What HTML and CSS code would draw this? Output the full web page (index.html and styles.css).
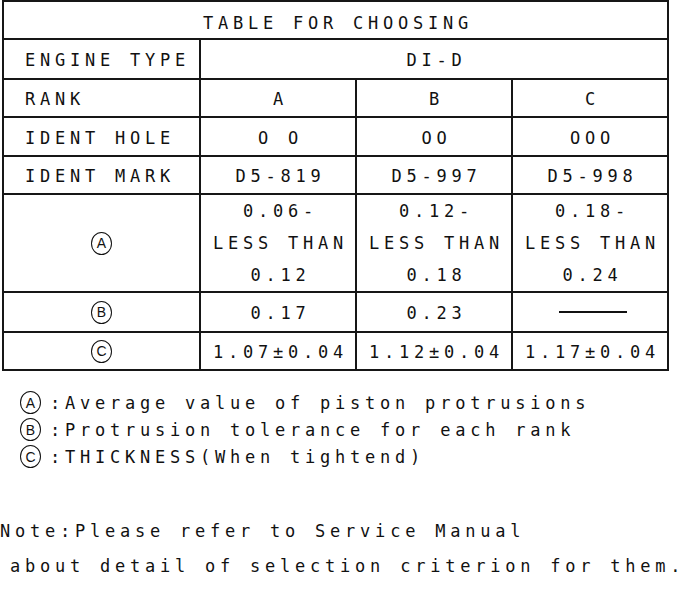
FILE: index.html
```html
<!DOCTYPE html>
<html>
<head>
<meta charset="utf-8">
<link rel="stylesheet" href="styles.css">
</head>
<body>
<table class="chart">
  <colgroup>
    <col class="c-label">
    <col class="c-rank">
    <col class="c-rank">
    <col class="c-rank">
  </colgroup>
  <tr class="r-title"><td colspan="4" class="title">TABLE FOR CHOOSING</td></tr>
  <tr class="r-engine"><td class="label">ENGINE TYPE</td><td colspan="3" class="val">DI-D</td></tr>
  <tr class="r-rank"><td class="label">RANK</td><td class="val">A</td><td class="val">B</td><td class="val">C</td></tr>
  <tr class="r-hole"><td class="label">IDENT HOLE</td><td class="val">O O</td><td class="val">OO</td><td class="val">OOO</td></tr>
  <tr class="r-mark"><td class="label">IDENT MARK</td><td class="val">D5-819</td><td class="val">D5-997</td><td class="val">D5-998</td></tr>
  <tr class="r-a">
    <td class="sym"><span class="circ">A</span></td>
    <td class="val multi"><span>0.06-</span><span>LESS THAN</span><span>0.12</span></td>
    <td class="val multi"><span>0.12-</span><span>LESS THAN</span><span>0.18</span></td>
    <td class="val multi"><span>0.18-</span><span>LESS THAN</span><span>0.24</span></td>
  </tr>
  <tr class="r-b"><td class="sym"><span class="circ">B</span></td><td class="val">0.17</td><td class="val">0.23</td><td class="val"><span class="dash"></span></td></tr>
  <tr class="r-c"><td class="sym"><span class="circ">C</span></td><td class="val">1.07±0.04</td><td class="val">1.12±0.04</td><td class="val">1.17±0.04</td></tr>
</table>

<ul class="legend">
  <li><span class="circ small">A</span><span class="ltext">:Average value of piston protrusions</span></li>
  <li><span class="circ small">B</span><span class="ltext">:Protrusion tolerance for each rank</span></li>
  <li><span class="circ small">C</span><span class="ltext">:THICKNESS(When tightend)</span></li>
</ul>

<div class="note">
  <p>Note:Please refer to Service Manual</p>
  <p class="indent">about detail of selection criterion for them.</p>
</div>
</body>
</html>
```

FILE: styles.css
```css
html, body {
  margin: 0;
  padding: 0;
  background: #ffffff;
}
body {
  font-family: "DejaVu Sans Mono", "Liberation Mono", monospace;
  color: #111;
  width: 697px;
  height: 598px;
  overflow: hidden;
}

.chart {
  border-collapse: collapse;
  table-layout: fixed;
  width: 666px;
  margin: 0 0 0 2px;
}
.c-label { width: 197px; }
.c-rank { width: 156px; }

.chart td {
  border: 2px solid #161616;
  padding: 2px 0 0 0;
  font-size: 17px;
  letter-spacing: 4.77px;
  vertical-align: middle;
  white-space: pre;
}

.r-title { height: 38px; }
.r-engine { height: 40px; }
.r-rank { height: 38px; }
.r-hole { height: 39px; }
.r-mark { height: 38px; }
.r-a { height: 97px; }
.r-b { height: 40px; }
.r-c { height: 38px; }

.chart .title {
  text-align: center;
  padding-top: 5px;
  padding-left: 5px;
}
.chart .label {
  padding-left: 21px;
  text-align: left;
}
.chart .val {
  text-align: center;
  padding-left: 5px;
}
.chart .multi {
  padding-top: 0;
}
.multi span {
  display: block;
  line-height: 32px;
}
.chart .sym {
  text-align: center;
  padding-top: 0;
}

.circ {
  display: inline-flex;
  align-items: center;
  justify-content: center;
  width: 21px;
  height: 23px;
  border: 1.8px solid #111;
  border-radius: 50%;
  font-family: "Liberation Sans", Arial, sans-serif;
  font-size: 14px;
  letter-spacing: 0;
  line-height: 1;
  box-sizing: border-box;
  vertical-align: middle;
}

.dash {
  display: inline-block;
  width: 68px;
  height: 0;
  border-top: 2px solid #111;
  vertical-align: middle;
  margin-bottom: 4px;
}

.legend {
  list-style: none;
  margin: 18px 0 0 20px;
  padding: 0;
}
.legend li {
  display: flex;
  align-items: center;
  height: 27px;
}
.ltext {
  margin-left: 9px;
  font-size: 17px;
  letter-spacing: 4.77px;
  white-space: pre;
}

.note {
  margin-top: 44px;
}
.note p {
  margin: 0;
  font-size: 17px;
  letter-spacing: 4.77px;
  line-height: 35px;
  white-space: pre;
}
.note .indent {
  padding-left: 10px;
}
```
